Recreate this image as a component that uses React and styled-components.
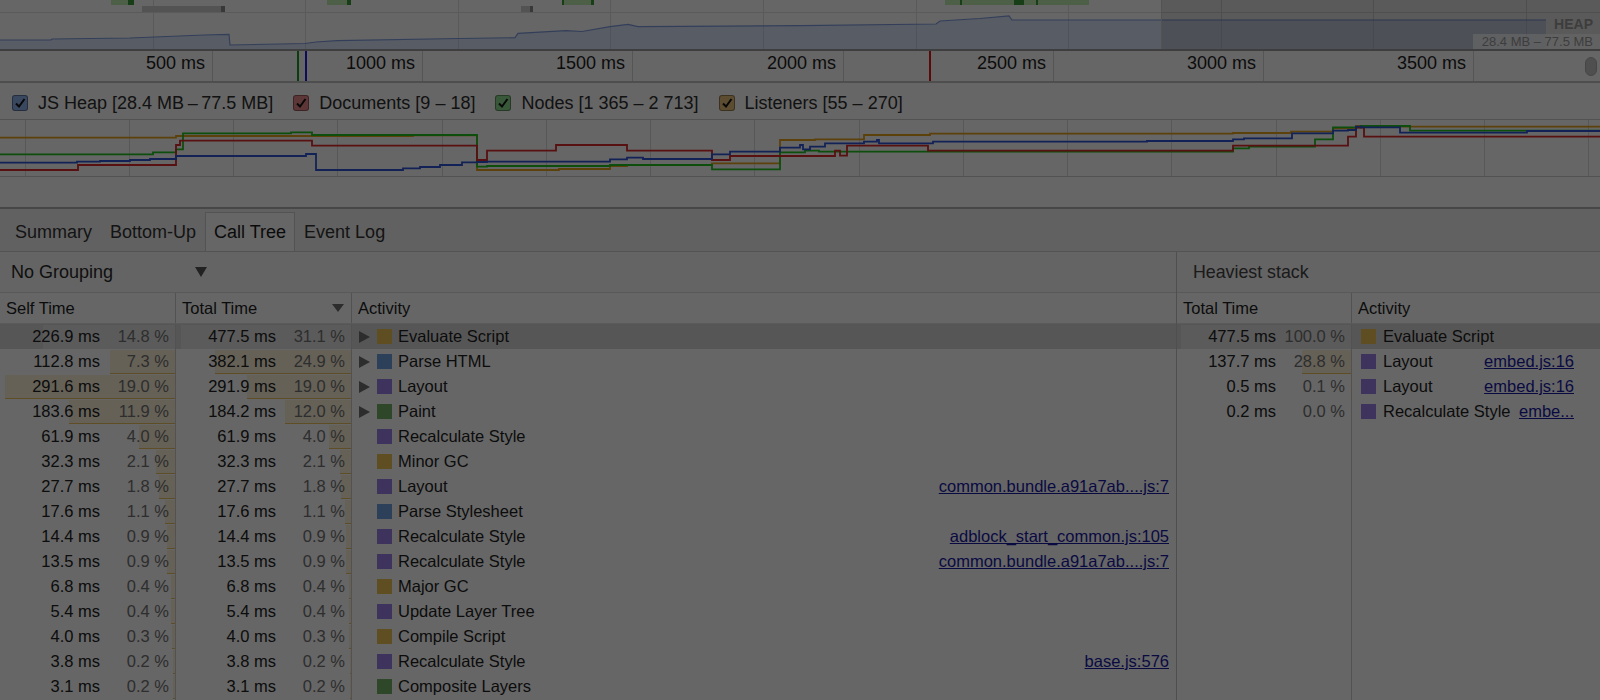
import React from 'react';
import styled, { createGlobalStyle } from 'styled-components';

const GlobalStyle = createGlobalStyle`
  html, body { margin: 0; padding: 0; background: #fff; }
  body { font-family: "Liberation Sans", Arial, sans-serif; color: #222; overflow: hidden; }
  * { box-sizing: border-box; }
`;

const Page = styled.div`
  position: relative;
  width: 1600px;
  height: 700px;
  overflow: hidden;
  display: flex;
  flex-direction: column;
  background: #fff;
`;

const Dim = styled.div`
  position: absolute;
  inset: 0;
  background: rgba(0, 0, 0, 0.6);
  pointer-events: none;
  z-index: 10;
`;

/* ---------- overview ---------- */
const Overview = styled.div`
  position: relative;
  height: 49px;
  flex: none;
`;
const ChartSvg = styled.svg`
  display: block;
`;
const HeapTitle = styled.div`
  position: absolute;
  right: 7px;
  top: 16px;
  font-size: 14px;
  line-height: 16px;
  font-weight: bold;
  color: #9a9a9a;
`;
const HeapRange = styled.div`
  position: absolute;
  right: 0;
  top: 34px;
  width: 127px;
  height: 15px;
  padding-right: 7px;
  background: rgba(255, 255, 255, 0.7);
  font-size: 13px;
  line-height: 15px;
  color: #9a9a9a;
  text-align: right;
`;

/* ---------- ruler ---------- */
const Ruler = styled.div`
  position: relative;
  height: 34px;
  flex: none;
  border-top: 2px solid #9c9c9c;
  border-bottom: 2px solid #c4c4c4;
`;
const Tick = styled.div`
  position: absolute;
  top: 0;
  bottom: 0;
  width: 120px;
  border-right: 1px solid #d4d4d4;
  display: flex;
  align-items: center;
  justify-content: flex-end;
  padding: 0 7px 5px 0;
  font-size: 18px;
  color: #1e1e1e;
  white-space: nowrap;
`;
const Marker = styled.div`
  position: absolute;
  top: 0;
  bottom: 0;
  width: 2px;
  background: ${(p) => p.$color};
`;
const ScrollPill = styled.div`
  position: absolute;
  right: 3px;
  top: 6px;
  width: 12px;
  height: 19px;
  border-radius: 6px;
  background: #c6c6c6;
  border: 1px solid #b0b0b0;
`;

/* ---------- memory legend & chart ---------- */
const Legend = styled.div`
  display: flex;
  align-items: center;
  height: 36px;
  flex: none;
  padding: 4px 0 0 12px;
`;
const LegendItem = styled.div`
  display: flex;
  align-items: center;
  gap: 10px;
  margin-right: 20px;
  font-size: 18px;
  color: #2e2e2e;
  white-space: nowrap;
`;
const Check = styled.span`
  width: 16px;
  height: 16px;
  border-radius: 3px;
  background: ${(p) => p.$color};
  border: 1px solid rgba(0, 0, 0, 0.35);
  display: flex;
  align-items: center;
  justify-content: center;
`;
const MemChart = styled.div`
  height: 58px;
  flex: none;
  border-top: 1px solid #cdcdcd;
  border-bottom: 1px solid #cdcdcd;
`;
const MemSpacer = styled.div`
  height: 32px;
  flex: none;
  border-bottom: 2px solid #b2b2b2;
`;

/* ---------- tabs ---------- */
const TabBar = styled.div`
  height: 43px;
  flex: none;
  display: flex;
  align-items: flex-end;
  padding-left: 6px;
  background: #f3f3f3;
  border-bottom: 1px solid #cfcfcf;
`;
const Tab = styled.div`
  height: 39px;
  display: flex;
  align-items: center;
  padding: 0 8px;
  font-size: 18px;
  color: ${(p) => (p.$active ? '#1b1b1b' : '#333')};
  background: ${(p) => (p.$active ? '#fff' : 'transparent')};
  border: 1px solid ${(p) => (p.$active ? '#cfcfcf' : 'transparent')};
  border-bottom: none;
  white-space: nowrap;
`;

/* ---------- bottom split ---------- */
const Split = styled.div`
  flex: 1;
  display: flex;
  min-height: 0;
`;
const LeftPanel = styled.div`
  width: 1177px;
  flex: none;
  display: flex;
  flex-direction: column;
  border-right: 1px solid #c6c6c6;
`;
const RightPanel = styled.div`
  flex: 1;
  display: flex;
  flex-direction: column;
  min-width: 0;
`;
const Toolbar = styled.div`
  height: 41px;
  flex: none;
  display: flex;
  align-items: center;
  padding-left: ${(p) => p.$pad}px;
  background: #fafafa;
  border-bottom: 1px solid #dedede;
  font-size: ${(p) => p.$size}px;
  color: ${(p) => p.$color};
  white-space: nowrap;
`;
const Select = styled.div`
  width: 196px;
  display: flex;
  align-items: center;
  justify-content: space-between;
  font-size: 18px;
  color: #2a2a2a;
`;

const GridHeader = styled.div`
  display: grid;
  grid-template-columns: ${(p) => p.$cols};
  height: 31px;
  flex: none;
  background: #fff;
  border-bottom: 1px solid #e2e2e2;
`;
const HeaderCell = styled.div`
  display: flex;
  align-items: center;
  padding: 0 7px 0 6px;
  font-size: 16.5px;
  color: #1e1e1e;
  border-right: ${(p) => (p.$last ? 'none' : '1px solid #cdcdcd')};
  white-space: nowrap;
`;
const SortArrow = styled.svg`
  margin-left: auto;
  display: block;
`;

const GridRow = styled.div`
  display: grid;
  grid-template-columns: ${(p) => p.$cols};
  height: 25px;
  flex: none;
  background: ${(p) => (p.$selected ? '#d8d8d8' : 'transparent')};
`;
const GridFill = styled.div`
  display: grid;
  grid-template-columns: ${(p) => p.$cols};
  flex: 1;
`;
const FillCell = styled.div`
  border-right: ${(p) => (p.$last ? 'none' : '1px solid #cdcdcd')};
`;
const TimeCell = styled.div`
  position: relative;
  display: flex;
  align-items: center;
  justify-content: flex-end;
  padding-right: 6px;
  font-size: 16.5px;
  border-right: 1px solid #cdcdcd;
  white-space: nowrap;
`;
const Bar = styled.div`
  position: absolute;
  right: 0;
  top: 1px;
  bottom: 0;
  background: ${(p) => (p.$selected ? 'rgba(255,255,255,0.3)' : 'rgba(240, 196, 87, 0.22)')};
  border-bottom: 1px solid ${(p) => (p.$selected ? 'transparent' : '#eec060')};
`;
const Ms = styled.span`
  position: relative;
  color: #222;
`;
const Pct = styled.span`
  position: relative;
  width: 69px;
  text-align: right;
  color: #737373;
`;
const ActivityCell = styled.div`
  display: flex;
  align-items: center;
  min-width: 0;
  padding-left: ${(p) => p.$padL}px;
  padding-right: ${(p) => p.$padR}px;
  font-size: 16.5px;
  color: #1e1e1e;
`;
const Expander = styled.span`
  width: 11px;
  height: 12px;
  margin-right: 7px;
  flex: none;
  display: flex;
`;
const Swatch = styled.span`
  width: 15px;
  height: 15px;
  flex: none;
  margin-right: ${(p) => p.$gap}px;
  background: ${(p) => p.$color};
`;
const Name = styled.span`
  white-space: nowrap;
  flex: none;
`;
const Link = styled.span`
  margin-left: auto;
  padding-left: 8px;
  min-width: 0;
  color: #1a1aa6;
  text-decoration: underline;
  white-space: nowrap;
  overflow: hidden;
  text-overflow: ellipsis;
`;

/* ---------- data ---------- */
const CAT = {
  script: '#efc457',
  loading: '#6ea0e2',
  render: '#9b7fe6',
  paint: '#74b266',
};

const leftRows = [
  ['226.9 ms', 14.8, '477.5 ms', 31.1, true, 'script', 'Evaluate Script', null, true],
  ['112.8 ms', 7.3, '382.1 ms', 24.9, true, 'loading', 'Parse HTML'],
  ['291.6 ms', 19.0, '291.9 ms', 19.0, true, 'render', 'Layout'],
  ['183.6 ms', 11.9, '184.2 ms', 12.0, true, 'paint', 'Paint'],
  ['61.9 ms', 4.0, '61.9 ms', 4.0, false, 'render', 'Recalculate Style'],
  ['32.3 ms', 2.1, '32.3 ms', 2.1, false, 'script', 'Minor GC'],
  ['27.7 ms', 1.8, '27.7 ms', 1.8, false, 'render', 'Layout', 'common.bundle.a91a7ab....js:7'],
  ['17.6 ms', 1.1, '17.6 ms', 1.1, false, 'loading', 'Parse Stylesheet'],
  ['14.4 ms', 0.9, '14.4 ms', 0.9, false, 'render', 'Recalculate Style', 'adblock_start_common.js:105'],
  ['13.5 ms', 0.9, '13.5 ms', 0.9, false, 'render', 'Recalculate Style', 'common.bundle.a91a7ab....js:7'],
  ['6.8 ms', 0.4, '6.8 ms', 0.4, false, 'script', 'Major GC'],
  ['5.4 ms', 0.4, '5.4 ms', 0.4, false, 'render', 'Update Layer Tree'],
  ['4.0 ms', 0.3, '4.0 ms', 0.3, false, 'script', 'Compile Script'],
  ['3.8 ms', 0.2, '3.8 ms', 0.2, false, 'render', 'Recalculate Style', 'base.js:576'],
  ['3.1 ms', 0.2, '3.1 ms', 0.2, false, 'paint', 'Composite Layers'],
];

const rightRows = [
  ['477.5 ms', 100.0, 'script', 'Evaluate Script', null, true],
  ['137.7 ms', 28.8, 'render', 'Layout', 'embed.js:16'],
  ['0.5 ms', 0.1, 'render', 'Layout', 'embed.js:16'],
  ['0.2 ms', 0.0, 'render', 'Recalculate Style', 'embe...'],
];

const fmtPct = (v) => `${v.toFixed(1)} %`;

const stepPath = (pts) => {
  let d = `M0 ${pts[0][1]}`;
  for (let i = 1; i < pts.length; i++) d += ` H${pts[i][0]} V${pts[i][1]}`;
  return d + ' H1600';
};

const memLines = [
  {
    color: '#e8a21a',
    pts: [[0, 137.7], [176, 136], [413, 135.3], [477, 170], [559, 169], [610, 166], [627, 165], [712, 163.3], [780, 140], [815, 139.3], [864, 135], [930, 133.7], [1233, 133], [1291, 131.7], [1333, 128.3], [1356, 126], [1362, 126.7]],
  },
  {
    color: '#22c322',
    pts: [[0, 154.3], [153, 152.3], [176, 149.3], [183, 133.3], [291, 132.3], [312, 135], [477, 166.7], [487, 166], [610, 165], [712, 169.3], [780, 152.3], [805, 150.7], [819, 151.7], [1233, 148.3], [1249, 146.7], [1315, 139.3], [1333, 127.3], [1361, 126], [1410, 130.7]],
  },
  {
    color: '#dc2a2a',
    pts: [[0, 170], [78, 165], [176, 145], [180, 140.7], [312, 145.7], [477, 160], [487, 150.7], [556, 145], [627, 150.7], [712, 160], [730, 156], [835, 150.7], [840, 155.7], [847, 145.7], [928, 150.7], [1233, 145.7], [1348, 136.7], [1356, 127.7], [1364, 136.7]],
  },
  {
    color: '#2f55d8',
    pts: [[0, 162.7], [77, 161.7], [100, 161], [130, 160], [150, 159], [176, 156], [306, 154], [316, 170], [403, 168.3], [420, 167], [440, 165], [462, 162.3], [477, 162], [487, 161.7], [610, 159.3], [627, 157.7], [643, 159], [712, 154.3], [730, 151.7], [780, 147.7], [800, 145], [803, 149.3], [810, 146.7], [825, 143.3], [864, 141.7], [877, 140], [879, 143.3], [933, 141.7], [1147, 141], [1233, 139.3], [1244, 138.3], [1292, 133.3], [1333, 130.7], [1348, 130], [1356, 126.7], [1361, 127.3], [1400, 132.7], [1527, 131]],
  },
];

const heapPts = [[0, 40], [51, 40], [52, 39], [130, 38], [204, 35], [229, 34.3], [230, 45], [305, 43.5], [316, 42], [337, 40.7], [459, 38.5], [515, 37.7], [518, 33.3], [566, 30.7], [582, 31.5], [610, 26.7], [628, 24.3], [638, 26.7], [800, 25.7], [936, 24], [940, 21], [980, 18.5], [1009, 16], [1012, 20], [1546, 20]];

const frameBars = [[111, 134], [327, 351], [562, 594], [945, 1089]];
const frameMarks = [[128, 134], [347, 351], [562, 564], [591, 594], [960, 962], [1014, 1024], [1036, 1038]];
const grayBars = [[142, 225], [521, 533]];
const grayMarks = [[221, 225], [530, 533]];

function OverviewChart() {
  const heapLine = heapPts.map((p) => p.join(',')).join(' ');
  const heapFill = `0,49 ${heapLine} 1546,49`;
  return (
    <ChartSvg width="1600" height="49" viewBox="0 0 1600 49">
      <line x1="0" y1="12.5" x2="1600" y2="12.5" stroke="#e2e2e2" />
      {Array.from({ length: 10 }, (_, i) => {
        const x = Math.round(152.6 * (i + 1)) + 0.5;
        return <line key={i} x1={x} y1="0" x2={x} y2="49" stroke="#e0e0e0" />;
      })}
      {frameBars.map(([a, b]) => (
        <rect key={a} x={a} y="0" width={b - a} height="5" fill="#c4eeb4" />
      ))}
      {frameMarks.map(([a, b]) => (
        <rect key={a} x={a} y="0" width={b - a} height="5" fill="#3c9c3c" />
      ))}
      {grayBars.map(([a, b]) => (
        <rect key={a} x={a} y="6" width={b - a} height="6" fill="#d0d0d0" />
      ))}
      {grayMarks.map(([a, b]) => (
        <rect key={a} x={a} y="6" width={b - a} height="6" fill="#8c8c8c" />
      ))}
      <polygon points={heapFill} fill="rgba(150,175,235,0.32)" />
      <polyline points={heapLine} fill="none" stroke="#7f9ce0" strokeWidth="1.2" />
      <rect x="1161" y="0" width="439" height="49" fill="rgba(0,0,0,0.12)" />
      <line x1="1161.5" y1="0" x2="1161.5" y2="49" stroke="#cfcfcf" />
    </ChartSvg>
  );
}

function MemoryChart() {
  return (
    <ChartSvg width="1600" height="56" viewBox="0 120 1600 56">
      {Array.from({ length: 16 }, (_, i) => {
        const x = Math.round(24.5 + 104.25 * i) + 0.5;
        return <line key={i} x1={x} y1="120" x2={x} y2="176" stroke="#dcdcdc" />;
      })}
      {memLines.map((l) => (
        <path key={l.color} d={stepPath(l.pts)} fill="none" stroke={l.color} strokeWidth="1.8" />
      ))}
    </ChartSvg>
  );
}

const CheckMark = () => (
  <svg width="12" height="12" viewBox="0 0 12 12">
    <path d="M2 6.5 L5 9.5 L10.5 2" fill="none" stroke="#151515" strokeWidth="2" />
  </svg>
);

const Triangle = () => (
  <svg width="11" height="12" viewBox="0 0 11 12">
    <polygon points="0,0 11,6 0,12" fill="#707070" />
  </svg>
);

const legend = [
  ['#8fb1ee', 'JS Heap [28.4 MB\u2009–\u200977.5 MB]'],
  ['#e88a8a', 'Documents [9 – 18]'],
  ['#8edc8e', 'Nodes [1 365 – 2 713]'],
  ['#e6bf78', 'Listeners [55 – 270]'],
];

const ticks = ['500 ms', '1000 ms', '1500 ms', '2000 ms', '2500 ms', '3000 ms', '3500 ms'];

const LEFT_COLS = '176px 176px 1fr';
const RIGHT_COLS = '175px 1fr';

function TimeValue({ ms, pct, max, selected }) {
  const w = (pct / max) * 170;
  return (
    <TimeCell>
      {w > 0 && <Bar $selected={selected} style={{ width: `${w}px` }} />}
      <Ms>{ms}</Ms>
      <Pct>{fmtPct(pct)}</Pct>
    </TimeCell>
  );
}

export default function App() {
  return (
    <>
      <GlobalStyle />
      <Page>
        <Overview>
          <OverviewChart />
          <HeapTitle>HEAP</HeapTitle>
          <HeapRange>28.4 MB – 77.5 MB</HeapRange>
        </Overview>

        <Ruler>
          {ticks.map((t, i) => (
            <Tick key={t} style={{ left: `${Math.round(212 + 210.2 * i) - 119}px` }}>
              {t}
            </Tick>
          ))}
          <Marker $color="#1f9a1f" style={{ left: '297px' }} />
          <Marker $color="#2020e0" style={{ left: '305px' }} />
          <Marker $color="#e01818" style={{ left: '929px' }} />
          <ScrollPill />
        </Ruler>

        <Legend>
          {legend.map(([c, label]) => (
            <LegendItem key={label}>
              <Check $color={c}>
                <CheckMark />
              </Check>
              {label}
            </LegendItem>
          ))}
        </Legend>
        <MemChart>
          <MemoryChart />
        </MemChart>
        <MemSpacer />

        <TabBar>
          <Tab>Summary</Tab>
          <Tab>Bottom-Up</Tab>
          <Tab $active>Call Tree</Tab>
          <Tab>Event Log</Tab>
        </TabBar>

        <Split>
          <LeftPanel>
            <Toolbar $pad={11} $size={18} $color="#2a2a2a">
              <Select>
                No Grouping
                <svg width="12" height="10" viewBox="0 0 12 10">
                  <polygon points="0,0 12,0 6,10" fill="#555" />
                </svg>
              </Select>
            </Toolbar>
            <GridHeader $cols={LEFT_COLS}>
              <HeaderCell>Self Time</HeaderCell>
              <HeaderCell>
                Total Time
                <SortArrow width="12" height="8" viewBox="0 0 12 8">
                  <polygon points="0,0 12,0 6,8" fill="#6e6e6e" />
                </SortArrow>
              </HeaderCell>
              <HeaderCell $last>Activity</HeaderCell>
            </GridHeader>
            {leftRows.map(([ms, sp, tms, tp, tri, cat, name, link, sel], i) => (
              <GridRow key={i} $cols={LEFT_COLS} $selected={sel}>
                <TimeValue ms={ms} pct={sp} max={19.0} selected={sel} />
                <TimeValue ms={tms} pct={tp} max={31.1} selected={sel} />
                <ActivityCell $padL={7} $padR={7}>
                  <Expander>{tri && <Triangle />}</Expander>
                  <Swatch $color={CAT[cat]} $gap={6} />
                  <Name>{name}</Name>
                  {link && <Link>{link}</Link>}
                </ActivityCell>
              </GridRow>
            ))}
            <GridFill $cols={LEFT_COLS}>
              <FillCell />
              <FillCell />
              <FillCell $last />
            </GridFill>
          </LeftPanel>

          <RightPanel>
            <Toolbar $pad={16} $size={17.8} $color="#444">
              Heaviest stack
            </Toolbar>
            <GridHeader $cols={RIGHT_COLS}>
              <HeaderCell>Total Time</HeaderCell>
              <HeaderCell $last>Activity</HeaderCell>
            </GridHeader>
            {rightRows.map(([ms, p, cat, name, link, sel], i) => (
              <GridRow key={i} $cols={RIGHT_COLS} $selected={sel}>
                <TimeValue ms={ms} pct={p} max={100} selected={sel} />
                <ActivityCell $padL={9} $padR={26}>
                  <Swatch $color={CAT[cat]} $gap={7} />
                  <Name>{name}</Name>
                  {link && <Link>{link}</Link>}
                </ActivityCell>
              </GridRow>
            ))}
            <GridFill $cols={RIGHT_COLS}>
              <FillCell />
              <FillCell $last />
            </GridFill>
          </RightPanel>
        </Split>
        <Dim />
      </Page>
    </>
  );
}
